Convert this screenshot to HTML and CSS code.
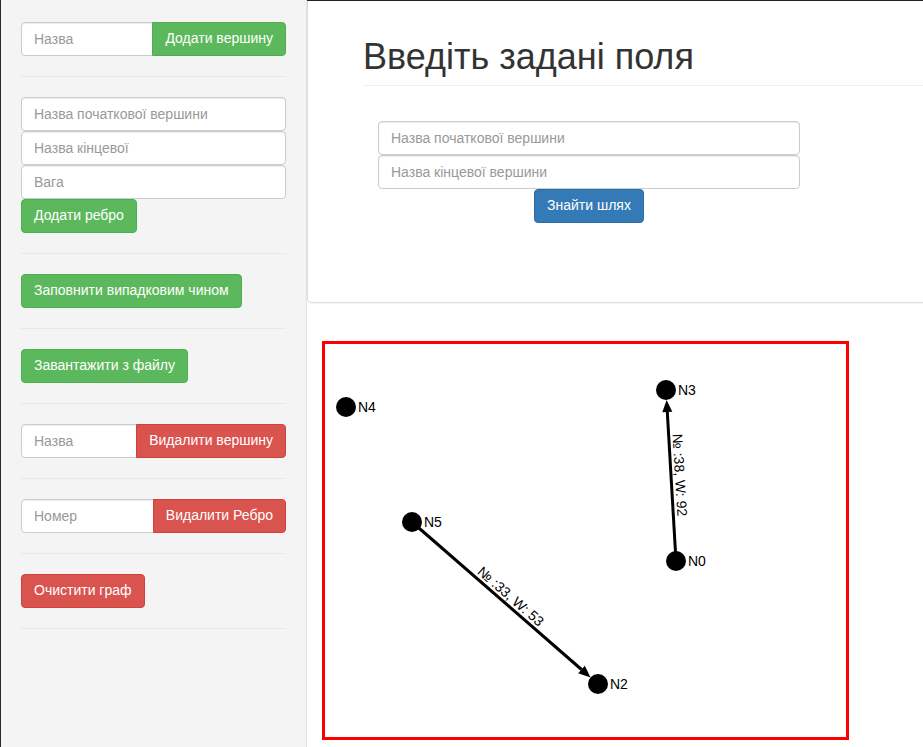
FILE: index.html
```html
<!DOCTYPE html>
<html lang="uk">
<head>
<meta charset="utf-8">
<title>Граф</title>
<link rel="stylesheet" href="styles.css">
</head>
<body>
<aside class="sidebar">
  <div class="input-group">
    <input class="form-control" placeholder="Назва">
    <button class="btn btn-success btn-addon">Додати вершину</button>
  </div>
  <hr>
  <div class="stack">
    <input class="form-control" placeholder="Назва початкової вершини">
    <input class="form-control" placeholder="Назва кінцевої">
    <input class="form-control" placeholder="Вага">
  </div>
  <button class="btn btn-success">Додати ребро</button>
  <hr>
  <button class="btn btn-success">Заповнити випадковим чином</button>
  <hr>
  <button class="btn btn-success">Завантажити з файлу</button>
  <hr>
  <div class="input-group">
    <input class="form-control" placeholder="Назва">
    <button class="btn btn-danger btn-addon">Видалити вершину</button>
  </div>
  <hr>
  <div class="input-group">
    <input class="form-control" placeholder="Номер">
    <button class="btn btn-danger btn-addon">Видалити Ребро</button>
  </div>
  <hr>
  <button class="btn btn-danger">Очистити граф</button>
  <hr>
</aside>
<main class="main">
  <section class="panel">
    <div class="page-header">
      <h1>Введіть задані поля</h1>
    </div>
    <form class="path-form">
      <input class="form-control" placeholder="Назва початкової вершини">
      <input class="form-control" placeholder="Назва кінцевої вершини">
      <div class="center">
        <button type="button" class="btn btn-primary">Знайти шлях</button>
      </div>
    </form>
  </section>
  <div class="canvas">
    <svg width="521" height="393" viewBox="0 0 521 393" xmlns="http://www.w3.org/2000/svg">
      <g class="edges">
        <line x1="87" y1="178" x2="256.5" y2="325.5" stroke="#000" stroke-width="3"/>
        <polygon points="265.5,333.4 253.2,329.3 259.8,321.7" fill="#000"/>
        <line x1="351" y1="217" x2="342.3" y2="68" stroke="#000" stroke-width="3"/>
        <polygon points="341.6,56 337.3,68.2 347.3,67.7" fill="#000"/>
      </g>
      <g class="edge-labels">
        <text transform="translate(180 259) rotate(41.05)" y="-4" text-anchor="middle">№ :33, W: 53</text>
        <text transform="translate(346 131.5) rotate(86.65)" y="-4" text-anchor="middle">№ :38, W: 92</text>
      </g>
      <g class="nodes">
        <circle cx="21" cy="63" r="10"/>
        <text x="33" y="68">N4</text>
        <circle cx="87" cy="178" r="10"/>
        <text x="99" y="183">N5</text>
        <circle cx="273" cy="340" r="10"/>
        <text x="285" y="345">N2</text>
        <circle cx="341" cy="46" r="10"/>
        <text x="353" y="51">N3</text>
        <circle cx="351" cy="217" r="10"/>
        <text x="363" y="222">N0</text>
      </g>
    </svg>
  </div>
</main>
</body>
</html>
```
FILE: styles.css
```css
* {
  box-sizing: border-box;
}

html, body {
  margin: 0;
  padding: 0;
  height: 100%;
}

body {
  display: flex;
  min-height: 747px;
  font-family: "Liberation Sans", Arial, sans-serif;
  font-size: 14px;
  line-height: 1.42857;
  color: #333;
  background: #fff;
  overflow: hidden;
}

.sidebar {
  width: 307px;
  flex: none;
  display: flex;
  flex-direction: column;
  align-items: flex-start;
  padding: 22px 20px 0 20px;
  background: #f4f4f4;
  border-left: 1px solid #2b2b2b;
  border-right: 1px solid #e3e3e3;
}

.sidebar hr {
  align-self: stretch;
  margin: 20px 0;
  border: 0;
  border-top: 1px solid #e8e8e8;
  height: 0;
}

.form-control {
  display: block;
  height: 34px;
  padding: 6px 12px;
  font-family: inherit;
  font-size: 14px;
  line-height: 1.42857;
  color: #555;
  background: #fff;
  border: 1px solid #ccc;
  border-radius: 4px;
  box-shadow: inset 0 1px 1px rgba(0, 0, 0, .075);
  outline: none;
}

.form-control::placeholder {
  color: #999;
}

.input-group {
  align-self: stretch;
  display: flex;
}

.input-group .form-control {
  flex: 1 1 auto;
  min-width: 0;
  border-top-right-radius: 0;
  border-bottom-right-radius: 0;
}

.stack {
  align-self: stretch;
  display: flex;
  flex-direction: column;
}

.stack .form-control {
  width: 100%;
}

.btn {
  display: inline-block;
  height: 34px;
  padding: 6px 12px;
  font-family: inherit;
  font-size: 14px;
  line-height: 1.42857;
  color: #fff;
  white-space: nowrap;
  border: 1px solid transparent;
  border-radius: 4px;
  cursor: pointer;
}

.btn-addon {
  flex: none;
  margin-left: -1px;
  border-top-left-radius: 0;
  border-bottom-left-radius: 0;
}

.btn-success {
  background: #5cb85c;
  border-color: #4cae4c;
}

.btn-danger {
  background: #d9534f;
  border-color: #d43f3a;
}

.btn-primary {
  background: #337ab7;
  border-color: #2e6da4;
}

.main {
  flex: 1 1 auto;
  display: flex;
  flex-direction: column;
  border-top: 1px solid #222;
  min-width: 0;
}

.panel {
  height: 302px;
  padding: 0 0 0 55px;
  background: #fff;
  border-left: 1px solid #ddd;
  border-bottom: 1px solid #ddd;
  border-bottom-left-radius: 5px;
  box-shadow: 0 1px 1px rgba(0, 0, 0, .05);
}

.page-header {
  margin-top: 36px;
  padding-bottom: 8px;
  border-bottom: 1px solid #eee;
}

.page-header h1 {
  margin: 0;
  font-size: 36px;
  font-weight: 400;
  line-height: 40px;
  color: #333;
}

.path-form {
  width: 422px;
  margin: 35px 0 0 15px;
}

.path-form .form-control {
  width: 100%;
}

.center {
  text-align: center;
}

.canvas {
  align-self: flex-start;
  margin: 38px 0 0 15px;
  border: 3px solid #ff0000;
  background: #fff;
}

.canvas svg {
  display: block;
}

.canvas text {
  font-family: "Liberation Sans", Arial, sans-serif;
  font-size: 14px;
  fill: #000;
}
```
